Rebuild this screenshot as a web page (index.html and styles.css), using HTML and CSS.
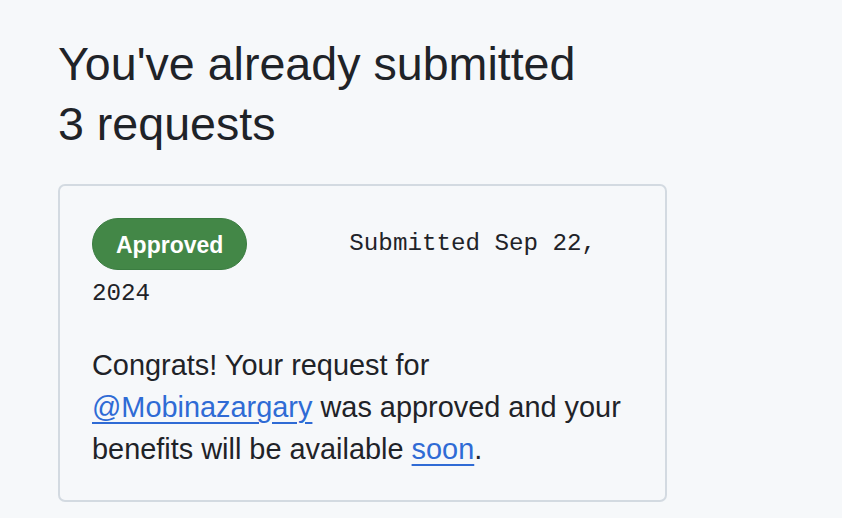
FILE: index.html
```html
<!DOCTYPE html>
<html lang="en">
<head>
<meta charset="utf-8">
<title>Requests</title>
<link rel="stylesheet" href="styles.css">
</head>
<body>
<main class="page">
  <h1 class="title">You've already submitted<br>3 requests</h1>
  <section class="card">
    <div class="meta"><span class="badge">Approved</span><span class="date">Submitted Sep 22, 2024</span></div>
    <p class="message">Congrats! Your request for <a class="link" href="#">@Mobinazargary</a> was approved and your benefits will be available <a class="link" href="#">soon</a>.</p>
  </section>
</main>
</body>
</html>
```
FILE: styles.css
```css
html, body {
  margin: 0;
  padding: 0;
  background: #f6f8fa;
}
.page {
  padding: 34px 0 0 58px;
  font-family: "Liberation Sans", Arial, sans-serif;
  color: #1f2328;
}
.title {
  margin: 0;
  font-size: 46.6px;
  line-height: 60px;
  font-weight: 400;
}
.card {
  box-sizing: border-box;
  width: 609px;
  margin-top: 30px;
  border: 2px solid #d3dae1;
  border-radius: 7px;
  padding: 32px 32px 30px 32px;
}
.meta {
  font-family: "Liberation Mono", "DejaVu Sans Mono", monospace;
  font-size: 24.2px;
  line-height: 48px;
}
.badge {
  display: inline-block;
  box-sizing: border-box;
  height: 52px;
  padding: 2px 23px 0 23px;
  border: 1px solid #3b7d41;
  border-radius: 26px;
  background: #438747;
  color: #ffffff;
  font-family: "Liberation Sans", Arial, sans-serif;
  font-size: 23px;
  font-weight: 700;
  line-height: 48px;
  vertical-align: -3px;
  margin-right: 102px;
}
.message {
  margin: 26px 0 0 0;
  font-size: 28.9px;
  line-height: 42px;
}
.link {
  color: #2f6bd5;
  text-decoration: underline;
  text-decoration-thickness: 2px;
  text-underline-offset: 5px;
}
```
